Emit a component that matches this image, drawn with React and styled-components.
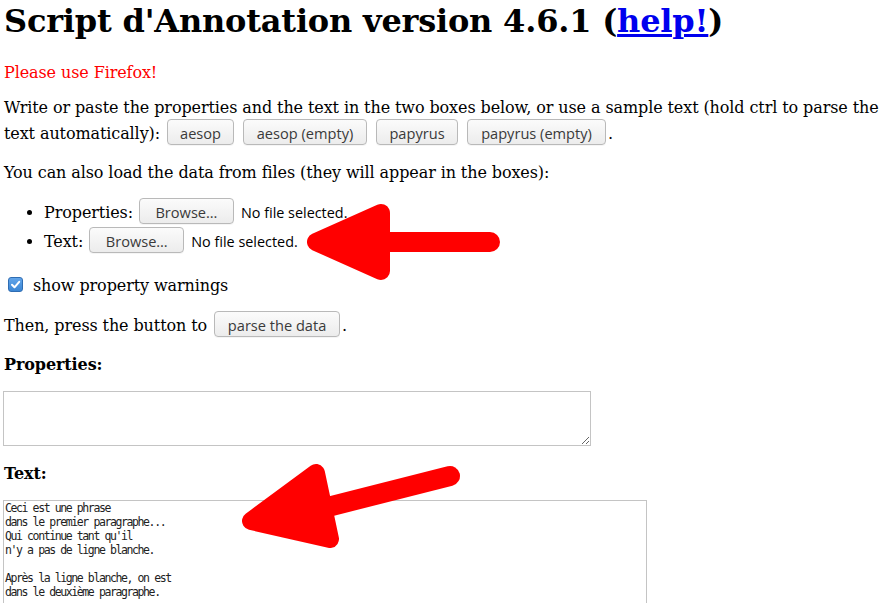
import React from 'react';
import styled, { createGlobalStyle } from 'styled-components';

const sample = `Ceci est une phrase
dans le premier paragraphe...
Qui continue tant qu'il
n'y a pas de ligne blanche.

Après la ligne blanche, on est
dans le deuxième paragraphe.`;

function Arrows() {
  return (
    <Overlay width="880" height="603" viewBox="0 0 880 603">
      <line x1="490" y1="240" x2="372" y2="240" />
      <polygon points="316,240 381,211 381,269" />
      <line x1="450" y1="474" x2="316" y2="508" />
      <polygon points="251,519 316,471 330,537" />
    </Overlay>
  );
}

function Check() {
  return (
    <Box>
      <svg width="13" height="13" viewBox="0 0 13 13">
        <path d="M3 6.8 L5.5 9.3 L10.2 3.8" />
      </svg>
    </Box>
  );
}

function App() {
  return (
    <Page>
      <GlobalStyle />
      <Title>
        Script d'Annotation version 4.6.1 (<a href="#help">help!</a>)
      </Title>
      <Warning>Please use Firefox!</Warning>
      <Para>
        Write or paste the properties and the text in the two boxes below, or
        use a sample text (hold ctrl to parse the text automatically):{' '}
        <Button $w={67}>aesop</Button> <Button $w={124}>aesop (empty)</Button>{' '}
        <Button $w={82}>papyrus</Button>{' '}
        <Button $w={139}>papyrus (empty)</Button>.
      </Para>
      <Para>You can also load the data from files (they will appear in the boxes):</Para>
      <FileList>
        <li>
          Properties: <FileButton $w={95}>Browse…</FileButton>
          <NoFile>No file selected.</NoFile>
        </li>
        <li>
          Text: <FileButton $w={95}>Browse…</FileButton>
          <NoFile>No file selected.</NoFile>
        </li>
      </FileList>
      <CheckRow>
        <Check />
        <span>show property warnings</span>
      </CheckRow>
      <Para $mt={14}>
        Then, press the button to <Button $w={126}>parse the data</Button>.
      </Para>
      <Label $mt={16}>Properties:</Label>
      <Area $w={588} $h={55} $mt={17} />
      <Label $mt={18}>Text:</Label>
      <Area $w={644} $h={200} $mt={17} defaultValue={sample} />
      <Arrows />
    </Page>
  );
}

const GlobalStyle = createGlobalStyle`
  html, body {
    margin: 0;
    background: #fff;
    overflow: hidden;
  }
  body {
    font-family: "DejaVu Serif", serif;
    font-size: 16px;
    letter-spacing: -0.1px;
    color: #000;
  }
`;

const Page = styled.div`
  position: relative;
  padding: 0 0 0 4px;
  height: 603px;
`;

const Title = styled.h1`
  font-size: 32px;
  font-weight: bold;
  letter-spacing: -0.2px;
  margin: 2px 0 23px;
  a {
    color: #0000ee;
    text-decoration: underline;
  }
`;

const Warning = styled.p`
  color: #ff0000;
  margin: 16px 0;
`;

const Para = styled.p`
  margin: ${(p) => p.$mt ?? 16}px 0 16px;
`;

const Button = styled.button`
  display: inline-block;
  box-sizing: border-box;
  width: ${(p) => p.$w}px;
  height: 26px;
  margin: 2px 2px;
  padding: 2px 0 0;
  line-height: 22px;
  font-family: "Open Sans", "DejaVu Sans", sans-serif;
  font-size: 14.6px;
  letter-spacing: 0;
  color: #3a3a3a;
  text-align: center;
  background: linear-gradient(#fbfbfb, #ececec);
  border: 1px solid #b9b9b9;
  border-radius: 4px;
  box-shadow: 0 1px 0 rgba(0, 0, 0, 0.04);
`;

const FileButton = styled(Button)`
  margin: 0 7px 0 1px;
`;

const NoFile = styled.span`
  font-family: "Open Sans", "DejaVu Sans", sans-serif;
  font-size: 14.4px;
  letter-spacing: 0;
`;

const FileList = styled.ul`
  margin: 16px 0;
  padding-left: 40px;
  li {
    line-height: 29px;
  }
`;

const CheckRow = styled.div`
  display: flex;
  align-items: flex-start;
  gap: 10px;
  margin: 20px 0 0;
  padding-left: 4px;
`;

const Box = styled.span`
  box-sizing: border-box;
  width: 15px;
  height: 15px;
  margin-top: 1px;
  display: flex;
  align-items: center;
  justify-content: center;
  border-radius: 3px;
  border: 1px solid #2f6db3;
  background: linear-gradient(#62a5ea, #3b86d4);
  svg path {
    fill: none;
    stroke: #fff;
    stroke-width: 2;
    stroke-linecap: round;
    stroke-linejoin: round;
  }
`;

const Label = styled.p`
  font-weight: bold;
  margin: ${(p) => p.$mt}px 0 0;
`;

const Area = styled.textarea`
  display: block;
  box-sizing: border-box;
  width: ${(p) => p.$w}px;
  height: ${(p) => p.$h}px;
  margin: ${(p) => p.$mt}px 0 0 -1px;
  padding: 0 1px;
  border: 1px solid #c4c4c4;
  font-family: "DejaVu Sans Mono", monospace;
  font-size: 11.5px;
  letter-spacing: -1.4px;
  line-height: 14px;
  color: #222;
  background: #fff;
  outline: none;
  resize: both;
`;

const Overlay = styled.svg`
  position: absolute;
  left: 0;
  top: 0;
  pointer-events: none;
  line {
    stroke: #ff0000;
    stroke-width: 20;
    stroke-linecap: round;
  }
  polygon {
    fill: #ff0000;
    stroke: #ff0000;
    stroke-width: 18;
    stroke-linejoin: round;
  }
`;

export default App;
